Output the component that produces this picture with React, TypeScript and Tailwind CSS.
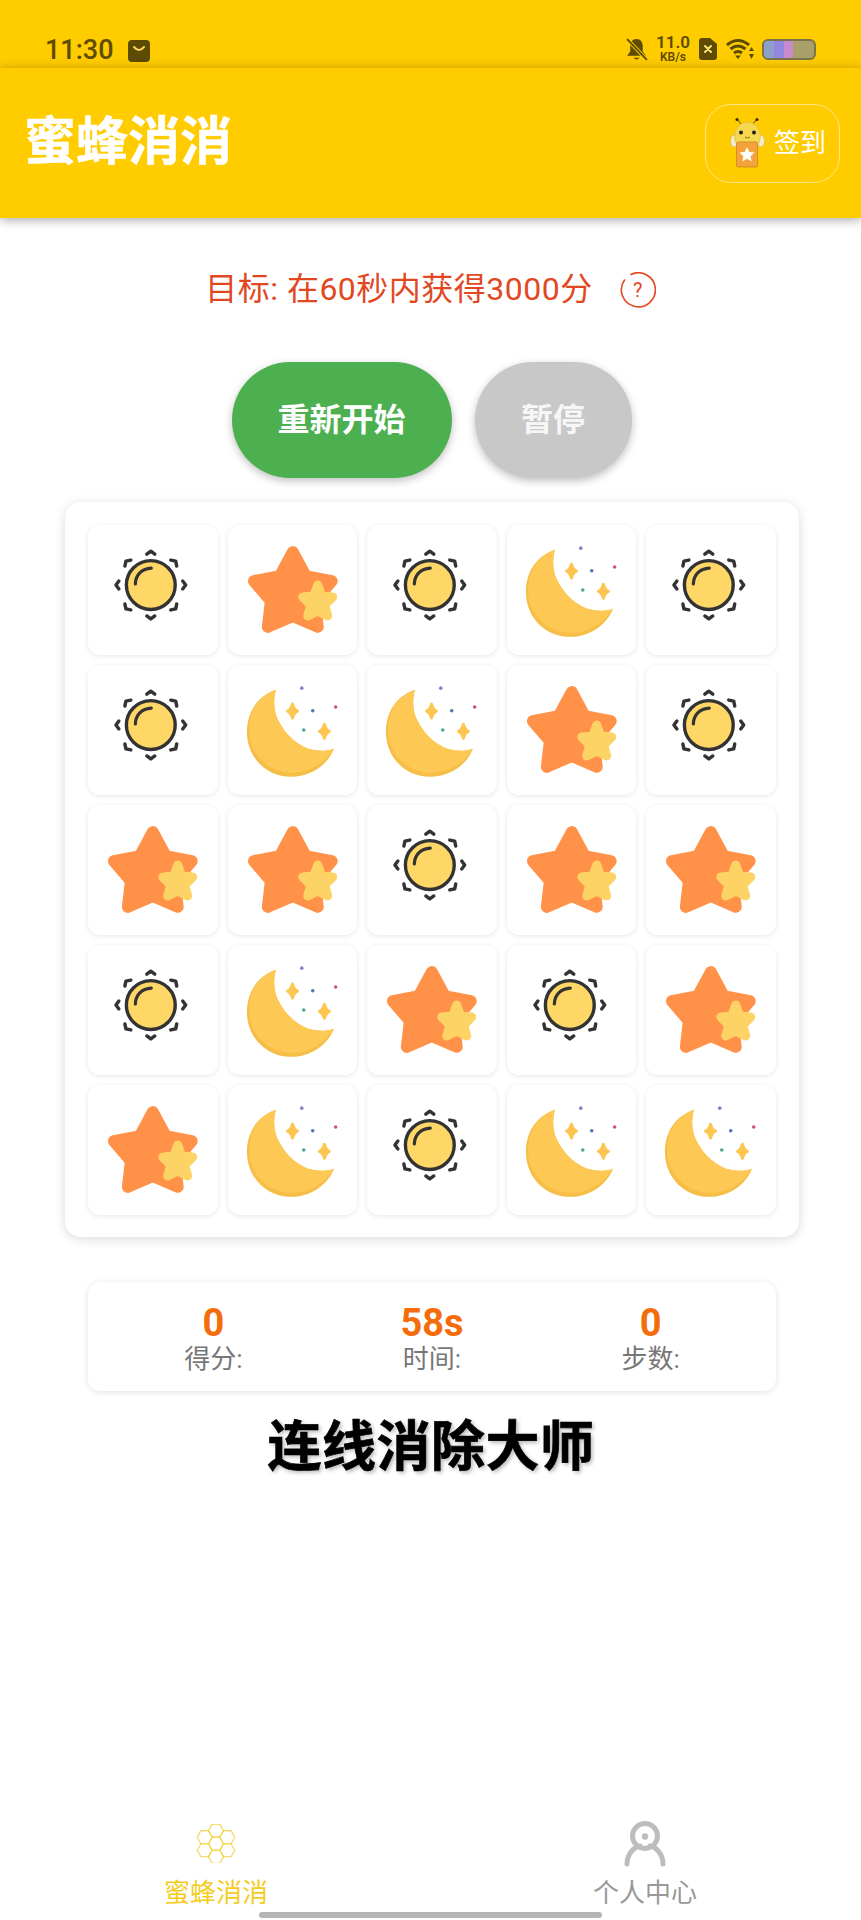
const BOARD = [
  ["sun", "star", "sun", "moon", "sun"],
  ["sun", "moon", "moon", "star", "sun"],
  ["star", "star", "sun", "star", "star"],
  ["sun", "moon", "star", "sun", "star"],
  ["star", "moon", "sun", "moon", "moon"],
];

function SunIcon() {
  return (
    <svg viewBox="0 0 130 130" className="w-full h-full">
      <circle cx="63" cy="60" r="24.5" fill="#fed766" stroke="#333" strokeWidth="3.4" />
      <path d="M47.5 59C47.5 50 54 43.5 63.5 43" fill="none" stroke="#333" strokeWidth="3.2" strokeLinecap="round" />
      <g fill="none" stroke="#333" strokeWidth="3.4" strokeLinecap="round" strokeLinejoin="round">
        <path d="M59 29l4-3 4 3" />
        <path d="M59 91l4 3 4-3" />
        <path d="M31 56l-3 4 3 4" />
        <path d="M95 56l3 4-3 4" />
        <path d="M37 41l1-5 5-1" />
        <path d="M83 35l5 1 1 5" />
        <path d="M37 79l1 5 5 1" />
        <path d="M83 85l5-1 1-5" />
      </g>
    </svg>
  );
}

function StarIcon() {
  return (
    <svg viewBox="0 0 130 130" className="w-full h-full">
      <polygon
        points="65,27 78,51 104,56 87,76 90,102 65,91 40,102 43,76 26,56 52,51"
        fill="#ff9248"
        stroke="#ff9248"
        strokeWidth="12"
        strokeLinejoin="round"
      />
      <polygon
        points="90,60 94,71 105,72 97,80 100,91 90,86 80,91 83,80 75,72 86,71"
        fill="#fdd365"
        stroke="#fdd365"
        strokeWidth="9"
        strokeLinejoin="round"
      />
    </svg>
  );
}

function Sparkle({ x, y }: { x: number; y: number }) {
  return (
    <path
      d={`M${x} ${y - 7}Q${x + 1.500} ${y - 1.500} ${x + 5} ${y}Q${x + 1.500} ${y + 1.500} ${x} ${y + 7}Q${x - 1.500} ${y + 1.500} ${x - 5} ${y}Q${x - 1.500} ${y - 1.500} ${x} ${y - 7}Z`}
      fill="#fdc651"
      stroke="#fdc651"
      strokeWidth="3"
      strokeLinejoin="round"
    />
  );
}

function MoonIcon() {
  return (
    <svg viewBox="0 0 130 130" className="w-full h-full">
      <path
        d="M48 24.700C27 32 19 50 19 67C19 93 39 112 63 112C83 112 100 100 106.300 83.700C97 87 86 86.500 76.300 82C66 77 57 68 51.300 57C46 48 45 36 48 24.700Z"
        fill="#f6bd47"
      />
      <path
        d="M48 24.700C28 32 21 50 21 65C21 90 42 109 66 108C83 107 98 98 106.300 83.700C97 87 86 86.500 76.300 82C66 77 57 68 51.300 57C46 48 45 36 48 24.700Z"
        fill="#fdc854"
      />
      <Sparkle x={64.7} y={46} />
      <Sparkle x={96.7} y={66.3} />
      <circle cx="74" cy="23" r="1.8" fill="#8a7fc7" />
      <circle cx="85" cy="45.7" r="1.8" fill="#5573b8" />
      <circle cx="108" cy="42" r="1.8" fill="#d0526a" />
      <circle cx="76" cy="65" r="1.8" fill="#4fa58f" />
    </svg>
  );
}

function BeeIcon() {
  return (
    <svg viewBox="0 0 36 52" className="w-[36px] h-[52px]">
      <path d="M12 8L7 2M22 8L27 2" stroke="#6b4a00" strokeWidth="1" fill="none" />
      <circle cx="7" cy="2.5" r="1.5" fill="#3a2a00" />
      <circle cx="27" cy="2.5" r="1.5" fill="#3a2a00" />
      <ellipse cx="4" cy="24" rx="3.5" ry="6" fill="#f2eecb" stroke="#c2b26b" strokeWidth="0.6" />
      <ellipse cx="31" cy="24" rx="3.5" ry="6" fill="#f2eecb" stroke="#c2b26b" strokeWidth="0.6" />
      <ellipse cx="17.5" cy="19" rx="13" ry="14" fill="#f6d84f" stroke="#d9b52c" strokeWidth="0.6" />
      <circle cx="11" cy="15.5" r="2" fill="#222" />
      <circle cx="24" cy="15.5" r="2" fill="#222" />
      <path d="M15 20q2.5 2 5 0" stroke="#6b4a00" strokeWidth="0.8" fill="none" />
      <rect x="6.5" y="25" width="21" height="25" rx="1.5" fill="#f3a23c" stroke="#c97f22" strokeWidth="0.7" />
      <polygon
        points="17,30 19.3,35 24.5,35.6 20.6,39.2 21.7,44.4 17,41.8 12.3,44.4 13.4,39.2 9.5,35.6 14.7,35"
        fill="#fff"
      />
    </svg>
  );
}

function StatusBar() {
  return (
    <div className="h-[68px] flex items-end pb-[2px] pl-[45px] pr-[45px] text-[#5c4b00]">
      <span className="text-[27px] font-medium leading-[32px]">11:30</span>
      <svg viewBox="0 0 22 22" className="w-[22px] h-[22px] ml-[14px] mb-[4px]">
        <rect x="0" y="0" width="22" height="22" rx="4" fill="#5c4b00" />
        <path d="M6 7q5 6 10 0" stroke="#fdd35a" strokeWidth="2" fill="none" strokeLinecap="round" />
      </svg>
      <div className="ml-auto flex items-center h-[32px] mb-[1px]">
        <svg viewBox="0 0 22 24" className="w-[23px] h-[25px]">
          <path d="M11 2c-4 0-6 3-6 7v5l-3 4h18l-3-4V9c0-4-2-7-6-7z" fill="#5c4b00" />
          <path d="M8 20q3 3 6 0" fill="#5c4b00" />
          <path d="M2 2l19 20" stroke="#ffcc00" strokeWidth="3.5" />
          <path d="M2 2l19 20" stroke="#5c4b00" strokeWidth="1.8" />
        </svg>
        <div className="ml-[9px] w-[32px] flex flex-col items-center font-semibold">
          <span className="text-[17px] leading-[17px]">11.0</span>
          <span className="text-[12px] leading-[13px]">KB/s</span>
        </div>
        <svg viewBox="0 0 18 22" className="w-[18px] h-[22px] ml-[10px]">
          <path d="M3 0h8l7 6v13a3 3 0 0 1-3 3H3a3 3 0 0 1-3-3V3a3 3 0 0 1 3-3z" fill="#5c4b00" />
          <path d="M6 8l6 6M12 8l-6 6" stroke="#ffe27a" strokeWidth="2" strokeLinecap="round" />
        </svg>
        <svg viewBox="0 0 28 22" className="w-[28px] h-[22px] ml-[9px]">
          <path d="M1 7q11-9 22 0" stroke="#5c4b00" strokeWidth="3" fill="none" />
          <path d="M4.500 11q7.500-6 15 0" stroke="#5c4b00" strokeWidth="3" fill="none" />
          <path d="M8 15q4-3 8 0" stroke="#5c4b00" strokeWidth="3" fill="none" />
          <polygon points="9,17.500 15,17.500 12,21" fill="#5c4b00" />
          <polygon points="25.500,9 28,13 23,13" fill="#5c4b00" />
          <polygon points="25.500,21 28,16 23,16" fill="#5c4b00" />
        </svg>
        <div className="w-[54px] h-[21px] ml-[8px] rounded-[6px] border-2 border-[#7a7448] flex overflow-hidden bg-[#a8a068]">
          <div className="w-[10px] bg-[#8e9fcc]" />
          <div className="w-[10px] bg-[#9388dd]" />
          <div className="w-[9px] bg-[#c98ad0]" />
        </div>
      </div>
    </div>
  );
}

function Hexagons() {
  const r = 7.7;
  const h = r * 0.866;
  const centers = [
    [20, 6.8],
    [8.4, 13.5],
    [31.6, 13.5],
    [20, 20.2],
    [8.4, 26.9],
    [31.6, 26.9],
    [20, 33.6],
  ];
  return (
    <svg viewBox="0 0 40 40" className="w-[40px] h-[40px] mt-[2px]">
      {centers.map(([x, y]) => (
        <polygon
          key={`${x}-${y}`}
          points={`${x - r},${y} ${x - r / 2},${y - h} ${x + r / 2},${y - h} ${x + r},${y} ${x + r / 2},${y + h} ${x - r / 2},${y + h}`}
          fill="none"
          stroke="#f5d34a"
          strokeWidth="1.1"
        />
      ))}
    </svg>
  );
}

export default function App() {
  return (
    <div className="relative h-[1920px] w-[861px] overflow-hidden bg-white flex flex-col font-[Roboto,'Noto_Sans_CJK_SC',sans-serif]">
      <div className="bg-[#ffcc00]">
        <StatusBar />
      </div>

      <header className="h-[150px] bg-[#ffcc00] flex items-center justify-between pl-[24px] pr-[21px] shadow-[0_2px_10px_rgba(0,0,0,0.35)] relative">
        <h1 className="text-[52px] font-bold text-white leading-none [-webkit-text-stroke:0.5px_white]">蜜蜂消消</h1>
        <div className="w-[135px] h-[79px] rounded-[26px] border border-white/50 flex items-center justify-end pr-[13px] gap-[8px]">
          <BeeIcon />
          <span className="text-[26px] text-white leading-none">签到</span>
        </div>
      </header>

      <div className="mt-[49px] h-[44px] flex items-center justify-center gap-[27px]">
        <span className="text-[32px] leading-none tracking-[0.5px] text-[#e2481f]">目标: 在60秒内获得3000分</span>
        <span className="relative w-[36px] h-[36px] mt-[1px]">
          <svg viewBox="0 0 36 36" className="w-full h-full">
            <path d="M11 2.500A17 17 0 1 1 4.500 8" fill="none" stroke="#e2481f" strokeWidth="1.6" strokeLinecap="round" />
          </svg>
          <span className="absolute inset-0 flex items-center justify-center text-[20px] leading-none text-[#e2481f]">?</span>
        </span>
      </div>

      <div className="mt-[51px] flex justify-center gap-[23px] pl-[2px]">
        <button className="w-[220px] h-[116px] rounded-[58px] bg-[#4caf50] text-white text-[32px] font-bold pb-[1px] shadow-[0_3px_8px_rgba(0,0,0,0.25)]">
          重新开始
        </button>
        <button className="w-[157px] h-[116px] rounded-[58px] bg-[#c8c8c8] text-[#f6f6f6] text-[32px] font-bold pb-[1px] shadow-[0_3px_8px_rgba(0,0,0,0.25)]">
          暂停
        </button>
      </div>

      <div className="mt-[24px] ml-[65px] w-[734px] h-[735px] rounded-[16px] bg-white p-[23px] shadow-[0_2px_12px_rgba(0,0,0,0.15)]">
        <div className="grid grid-cols-5 gap-[10px]">
          {BOARD.flat().map((kind, i) => (
            <div key={i} className="h-[130px] rounded-[12px] bg-white shadow-[0_1px_5px_rgba(0,0,0,0.1)]">
              {kind === "sun" && <SunIcon />}
              {kind === "star" && <StarIcon />}
              {kind === "moon" && <MoonIcon />}
            </div>
          ))}
        </div>
      </div>

      <div className="mt-[45px] ml-[88px] w-[688px] h-[109px] rounded-[12px] bg-white px-[16px] pt-[20px] grid grid-cols-3 shadow-[0_1px_6px_rgba(0,0,0,0.12)]">
        {[
          ["0", "得分:"],
          ["58s", "时间:"],
          ["0", "步数:"],
        ].map(([value, label]) => (
          <div key={label} className="flex flex-col items-center">
            <span className="text-[38px] leading-[42px] font-bold text-[#f56c0a]">{value}</span>
            <span className="text-[26px] leading-[30px] text-[#777]">{label}</span>
          </div>
        ))}
      </div>

      <h2 className="mt-[19px] pl-[1px] text-center text-[54px] leading-[76px] tracking-[0.5px] font-bold text-black [-webkit-text-stroke:0.7px_black] [text-shadow:2px_2px_4px_rgba(0,0,0,0.3)]">
        连线消除大师
      </h2>

      <nav className="mt-auto h-[98px] pb-[12px] flex">
        <div className="ml-[164px] w-[104px] flex flex-col items-center">
          <Hexagons />
          <span className="mt-[15px] text-[26px] leading-[30px] text-[#f5cc1e]">蜜蜂消消</span>
        </div>
        <div className="ml-[325px] w-[104px] flex flex-col items-center">
          <svg viewBox="0 0 42 46" className="w-[42px] h-[48px] -mt-[3px]">
            <circle cx="21" cy="16" r="12.5" fill="none" stroke="#bdbdbd" strokeWidth="5" />
            <circle cx="21" cy="16.500" r="3.200" fill="#bdbdbd" />
            <path d="M3 44C3 34 10 27 16 26M39 44C39 34 32 27 26 26" fill="none" stroke="#bdbdbd" strokeWidth="5" strokeLinecap="round" />
          </svg>
          <span className="mt-[11px] text-[26px] leading-[30px] text-[#999]">个人中心</span>
        </div>
      </nav>

      <div className="absolute left-[259px] bottom-[2px] w-[343px] h-[6px] rounded-full bg-[#b5b5b5]" />
    </div>
  );
}
